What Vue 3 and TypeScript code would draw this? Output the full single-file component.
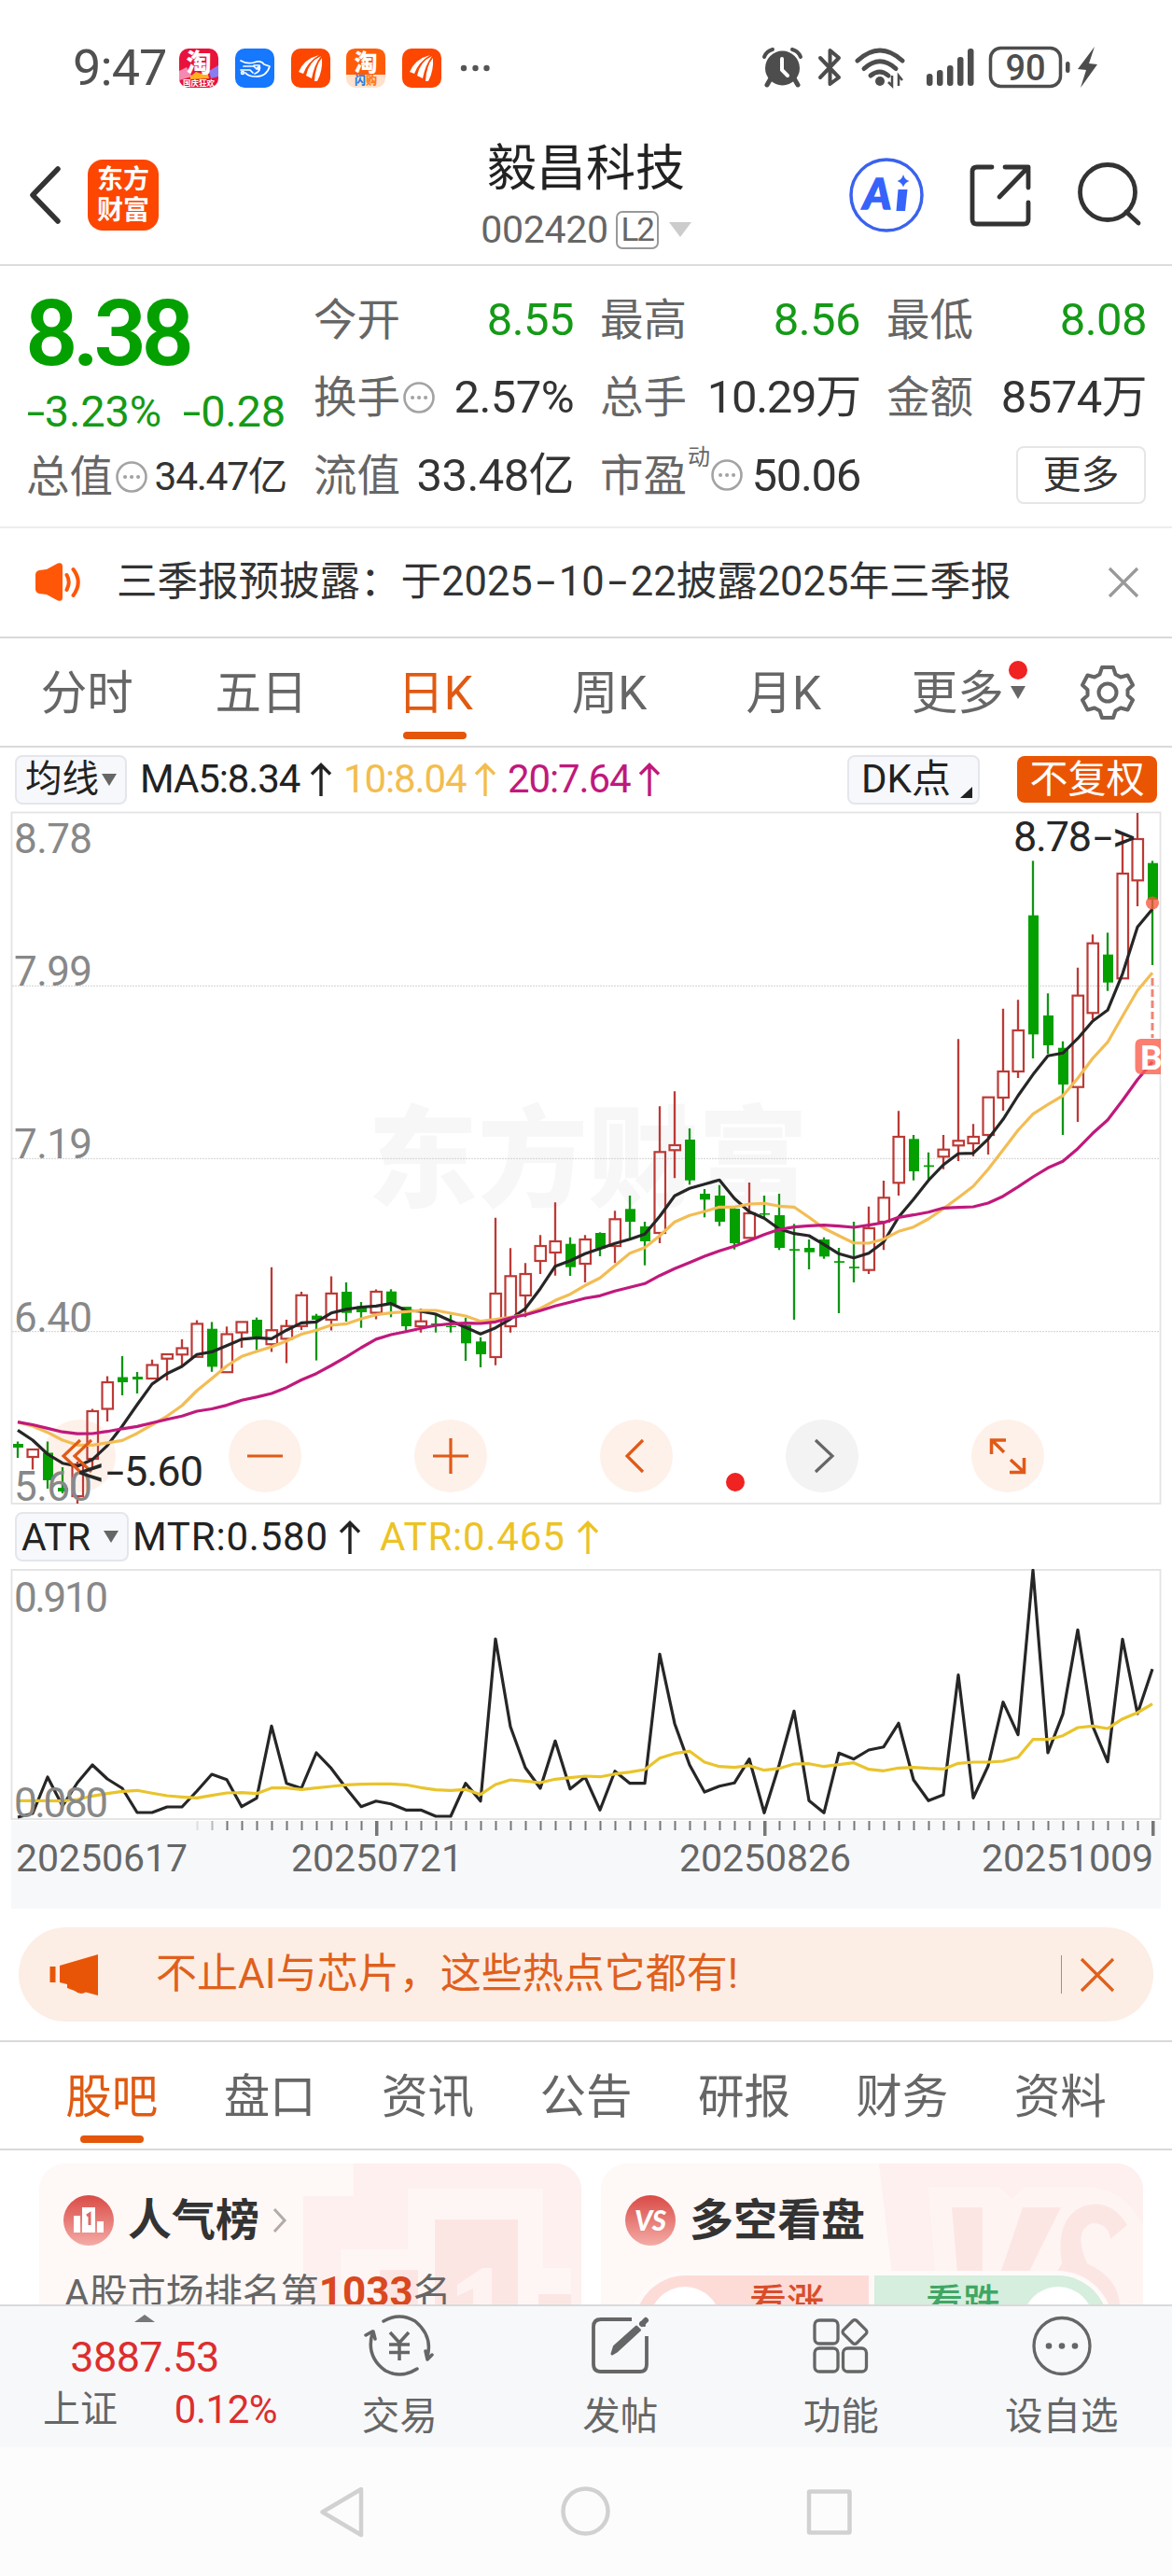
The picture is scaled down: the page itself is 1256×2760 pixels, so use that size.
<script setup lang="ts">
type Candle = [kind: 'u' | 'd', high: number, top: number, bottom: number, low: number]

const STEP = 16
const X0 = 19
const xAt = (i: number): number => X0 + i * STEP

const candles: Candle[] = [
  ['d', 1544.5, 1547, 1551, 1562], ['u', 1553, 1553, 1561, 1574.5], ['d', 1544.5, 1556.5, 1586, 1595],
  ['d', 1572, 1594, 1598, 1600], ['u', 1566, 1569, 1603, 1611], ['u', 1509.5, 1512, 1563, 1575],
  ['u', 1474.6, 1481, 1509.5, 1523], ['d', 1453, 1475.5, 1481, 1495], ['d', 1470, 1475, 1478, 1493],
  ['u', 1456.7, 1462.5, 1477, 1477], ['u', 1451, 1451, 1455.7, 1479], ['u', 1435, 1444.5, 1451.3, 1463],
  ['u', 1414.5, 1418.4, 1453.8, 1453.8], ['d', 1416.4, 1423.7, 1464.4, 1469.8], ['u', 1421.3, 1429.5, 1470.2, 1470.2],
  ['u', 1416.4, 1416.4, 1427.6, 1444], ['d', 1411.6, 1414, 1432, 1446.5], ['u', 1357.8, 1425.2, 1440.2, 1448.4],
  ['u', 1414, 1420.8, 1434.4, 1460.5], ['u', 1384, 1387.8, 1420.8, 1425], ['d', 1407.7, 1409.6, 1414, 1457.6],
  ['u', 1367.5, 1385.9, 1414, 1425.6], ['d', 1374, 1384, 1406.7, 1416], ['d', 1395, 1399.5, 1406, 1422.7],
  ['u', 1381.5, 1384, 1406.5, 1413.6], ['d', 1381.3, 1383.7, 1397.7, 1411.3], ['d', 1400, 1400, 1421, 1425.7],
  ['u', 1402, 1415.7, 1421, 1427.7], ['d', 1409, 1418, 1419.5, 1427.7], ['d', 1408.7, 1420.7, 1422, 1427.7],
  ['d', 1412, 1419.7, 1439.3, 1458], ['d', 1432.7, 1437.3, 1451, 1465], ['u', 1304.7, 1386, 1454, 1462.7],
  ['u', 1337.3, 1367.3, 1421, 1427.7], ['u', 1353.3, 1365, 1388, 1411.3], ['u', 1323.3, 1335, 1351, 1365],
  ['u', 1288.3, 1330, 1342, 1366.7], ['d', 1325.7, 1332.7, 1357.7, 1367], ['u', 1323.3, 1328, 1354, 1374],
  ['d', 1320.3, 1321, 1337.7, 1346], ['u', 1297.3, 1306.3, 1335, 1353.3], ['d', 1281, 1295.3, 1309, 1327.7],
  ['d', 1309, 1314, 1330, 1355.7], ['u', 1185.3, 1234.3, 1321, 1332], ['u', 1169.3, 1227, 1232.3, 1262.3],
  ['d', 1209, 1221, 1264.7, 1269.3], ['d', 1274, 1279, 1285.3, 1304.3], ['d', 1269.7, 1281, 1309, 1313.7],
  ['d', 1293, 1295, 1332, 1338.7], ['u', 1267, 1300, 1326.3, 1326.3], ['d', 1281, 1300, 1301.5, 1306],
  ['d', 1279, 1302, 1337, 1339.3], ['d', 1311.3, 1338.3, 1340, 1414], ['d', 1328, 1337, 1341.7, 1360],
  ['d', 1325.7, 1328, 1346.3, 1348.7], ['d', 1337, 1351.2, 1352.9, 1407], ['d', 1309, 1357.2, 1358.9, 1374],
  ['u', 1292.7, 1316, 1360.7, 1365], ['u', 1265, 1283.3, 1309, 1339.3], ['u', 1190.3, 1218, 1267.3, 1281],
  ['d', 1216, 1220.3, 1255, 1264.7], ['d', 1234.7, 1248.5, 1250.2, 1263], ['u', 1216, 1231.7, 1239.3, 1252.7],
  ['u', 1113.3, 1222.3, 1227.3, 1244], ['u', 1204.3, 1218, 1225, 1239], ['u', 1175.7, 1175.7, 1216, 1237],
  ['u', 1080.7, 1148, 1176, 1190], ['u', 1071.3, 1104, 1148, 1155], ['d', 922.3, 980.7, 1108.3, 1134],
  ['d', 1064.3, 1088, 1120, 1129.3], ['d', 1115.7, 1122.7, 1162, 1216], ['u', 1036.7, 1066.7, 1164.7, 1202],
  ['u', 1001.3, 1010.7, 1085.3, 1092.3], ['d', 999.3, 1022.7, 1052.7, 1061.7], ['u', 894.3, 936, 1048.3, 1048.3],
  ['u', 871, 899, 943.3, 971], ['d', 922.3, 924.7, 964, 1034],
]

const ma5 = [
  1532.3, 1543, 1558, 1567.7, 1571, 1563.8, 1548.8, 1528, 1505, 1482.9, 1471.7, 1464, 1451.3, 1448.4, 1441.7, 1434.9,
  1433.4, 1434.4, 1425.2, 1417.4, 1416.4, 1406.8, 1402.9, 1400.5, 1399.3, 1396.7, 1404, 1405, 1408, 1415.3, 1422.3, 1429.3,
  1422.7, 1413.3, 1402, 1380.7, 1356.7, 1350.7, 1343.3, 1337.7, 1332.3, 1327.7, 1322.3, 1303.3, 1281.3, 1273.3, 1268.7,
  1264.3, 1284, 1298.3, 1305.3, 1316.7, 1321.7, 1324, 1333.3, 1343.3, 1347.7, 1342.7, 1330.7, 1304, 1285, 1264.7, 1248,
  1236, 1235.7, 1220.3, 1199.3, 1174, 1151.3, 1131.3, 1128.3, 1112.7, 1094, 1082.3, 1043.3, 993.3, 974,
]
const ma10 = [
  1523.6, 1528, 1534.7, 1543, 1548.3, 1548.3, 1545.9, 1543.4, 1535.7, 1526.5, 1517.3, 1506, 1490, 1477, 1463.5, 1453.3,
  1448, 1443, 1436.8, 1429.5, 1425.2, 1419.8, 1418.4, 1413, 1408.7, 1406.7, 1405.3, 1404, 1404, 1407, 1410, 1415.7, 1413.7,
  1411.3, 1408.3, 1402, 1393.3, 1386.7, 1377.3, 1369.3, 1356, 1342.7, 1336.7, 1324, 1309.3, 1302.3, 1298, 1293.3, 1293.3,
  1290, 1289.3, 1292.3, 1293.3, 1304.3, 1316, 1324, 1331.7, 1332, 1327.7, 1319.3, 1314.7, 1306, 1295, 1283.3, 1271, 1252.7,
  1232, 1211, 1193.7, 1183.3, 1174, 1155.3, 1134, 1116.7, 1088.7, 1061.3, 1042.3,
]
const ma20 = [
  1523.6, 1526.5, 1530.4, 1534.2, 1536.2, 1536, 1533.7, 1530.8, 1528.4, 1524.5, 1520.7, 1517.3, 1512, 1509.5, 1505.6,
  1500.3, 1496.9, 1493, 1486.7, 1478.5, 1471.7, 1463, 1453.8, 1444, 1434.9, 1430, 1426.7, 1423.3, 1420, 1418.3, 1417.7, 1418,
  1416.3, 1412, 1408.7, 1404.3, 1399.3, 1395.3, 1391, 1388.3, 1383.3, 1379.3, 1375.3, 1366.7, 1359.3, 1352.7, 1346, 1340.3,
  1335.3, 1329.3, 1322.7, 1317.3, 1314.7, 1313.3, 1312.7, 1313.7, 1315, 1312.7, 1310, 1304.3, 1301.7, 1298.7, 1294.3,
  1293.7, 1293, 1289, 1281.7, 1271.7, 1261, 1251.3, 1244.3, 1230.7, 1214.3, 1200, 1179, 1156.7, 1137.7,
]
const mtr = [
  1947, 1943, 1904, 1935, 1910, 1891, 1906, 1916, 1942, 1942, 1936, 1936, 1919, 1901, 1906.7, 1935.7, 1926.7, 1849.3,
  1910.7, 1916, 1878, 1894.7, 1916, 1935.7, 1929.7, 1932.7, 1939.3, 1939.3, 1946, 1946, 1910.7, 1929.7, 1756, 1850, 1894,
  1916, 1865.3, 1916.7, 1904, 1939.3, 1897.7, 1910.7, 1910.7, 1772.3, 1846.7, 1891, 1920, 1913.7, 1910.3, 1884.7, 1942.3,
  1891, 1833.3, 1929.3, 1942.3, 1878.3, 1884.7, 1875, 1871.7, 1846.3, 1907, 1929.3, 1923, 1794.7, 1926.3, 1892, 1823.7,
  1858.7, 1682.3, 1878, 1836.7, 1746.3, 1849.3, 1887.7, 1756.3, 1836, 1788.3,
]
const atr = [
  1929.3, 1929.3, 1929.3, 1929.7, 1928, 1924.3, 1921.7, 1919.3, 1918.3, 1921.3, 1924, 1925.3, 1926.3, 1923.7, 1921,
  1920.7, 1921.7, 1915.7, 1915.7, 1917.3, 1915.7, 1914, 1912.3, 1911.7, 1911.3, 1911.3, 1912.3, 1915.3, 1917.7, 1918.3,
  1917.3, 1922.7, 1912, 1907, 1908.3, 1910, 1906.3, 1904.7, 1903, 1903.7, 1900.7, 1898.7, 1896, 1883.7, 1878.7, 1876.3,
  1888, 1892.7, 1893.7, 1891.7, 1896.7, 1894.7, 1890, 1889.7, 1892.7, 1890.7, 1888.7, 1895.7, 1897.3, 1894.3, 1893.7,
  1894.7, 1895.3, 1889.3, 1888, 1888, 1887, 1882.7, 1863.7, 1863.7, 1859.7, 1851, 1849.3, 1852, 1841.7, 1835, 1825.7,
]

const points = (values: number[]): string => values.map((y, i) => `${xAt(i)},${y}`).join(' ')

const priceLabels = [
  { text: '8.78', y: 914 },
  { text: '7.99', y: 1056 },
  { text: '7.19', y: 1241 },
  { text: '6.40', y: 1427 },
  { text: '5.60', y: 1608 },
]
const ticks = Array.from({ length: 65 }, (_, k) => k + 12)
const isMajor = (i: number): boolean => i === 24 || i === 50 || i === 76
const dates = [
  { text: '20250617', x: 17 },
  { text: '20250721', x: 312 },
  { text: '20250826', x: 728 },
  { text: '20251009', x: 1052 },
]
const tools = [85, 284, 483, 682, 881, 1080]
const periods = ['分时', '五日', '日K', '周K', '月K']
const sections = ['股吧', '盘口', '资讯', '公告', '研报', '财务', '资料']
</script>

<template>
  <div class="screen">
    <header class="status">
      <span class="clock">9:47</span>
      <div class="apps">
        <svg width="42" height="42" viewBox="0 0 42 42">
          <rect width="42" height="42" rx="10" fill="#e8123c" />
          <path d="M0 24 L8 20 L14 30 L0 34Z" fill="#f58ab0" />
          <path d="M42 18 L32 24 L34 32 L42 30Z" fill="#8a7cf0" />
          <path d="M12 30 L18 25 L24 27 L30 24 L32 32 L12 33Z" fill="#ffb21e" />
          <text x="21" y="25" font-size="27" font-weight="900" text-anchor="middle" fill="#fff">淘</text>
          <text x="21" y="39.5" font-size="8.5" font-weight="700" text-anchor="middle" fill="#fff">国庆狂欢</text>
        </svg>
        <svg width="42" height="42" viewBox="0 0 42 42">
          <rect width="42" height="42" rx="10" fill="#1677ff" />
          <g fill="none" stroke="#fff" stroke-width="1.7" stroke-linecap="round" stroke-linejoin="round">
            <path d="M6 13 Q13 17 20 15 Q28 12 31 17 L37 19 Q34 30 22 30 Q14 30 11 26" />
            <path d="M9 19 H20 L23 22 M6 23 H16 L19 26 M20 18 H26 Q28 24 21 27" />
            <circle cx="8" cy="26" r="1.4" /><circle cx="25" cy="21" r="1.2" />
          </g>
        </svg>
        <svg width="42" height="42" viewBox="0 0 42 42"><rect width="42" height="42" rx="10" fill="#fd4600" /><path d="M8 25 Q14 11 30 7 Q18 14 13 27Z M16 29 Q19 14 32 8 Q25 17 22 32Z M25 35 Q26 18 33 10 Q34 24 28 35Z" fill="#fff" /></svg>
        <svg width="42" height="42" viewBox="0 0 42 42">
          <rect width="42" height="42" rx="10" fill="#ffe2cb" />
          <path d="M0 28 V10 Q0 0 10 0 H32 Q42 0 42 10 V28Z" fill="#ff5c0a" />
          <text x="21" y="24" font-size="25" font-weight="900" text-anchor="middle" fill="#fff">淘</text>
          <text x="21" y="39" font-size="12" font-weight="900" text-anchor="middle" fill="#ff7a1a"><tspan fill="#2c7be0">闪</tspan>购</text>
        </svg>
        <svg width="42" height="42" viewBox="0 0 42 42"><rect width="42" height="42" rx="10" fill="#fd4600" /><path d="M8 25 Q14 11 30 7 Q18 14 13 27Z M16 29 Q19 14 32 8 Q25 17 22 32Z M25 35 Q26 18 33 10 Q34 24 28 35Z" fill="#fff" /></svg>
      </div>
      <svg class="dots" width="32" height="8" viewBox="0 0 32 8" fill="#555"><circle cx="4" cy="4" r="3.2" /><circle cx="16.5" cy="4" r="3.2" /><circle cx="28.5" cy="4" r="3.2" /></svg>
      <svg class="sys" width="364" height="50" viewBox="816 47 364 50">
        <g fill="#4d4d4d">
          <circle cx="838.5" cy="73" r="18.5" />
          <path d="M826 84 L822 91 M851 84 L855 91" stroke="#4d4d4d" stroke-width="5" stroke-linecap="round" />
          <path d="M819 61 Q821 55 828 53 M858 61 Q856 55 849 53" fill="none" stroke="#4d4d4d" stroke-width="4" stroke-linecap="round" />
          <path d="M838 63 V75 L844 81" fill="none" stroke="#fff" stroke-width="4" stroke-linecap="round" />
          <path d="M879 62 L899 83 L889.500 90 V54 L899 62 L879 83" fill="none" stroke="#4d4d4d" stroke-width="4" stroke-linejoin="round" stroke-linecap="round" />
          <g fill="none" stroke="#4d4d4d" stroke-width="5" stroke-linecap="round">
            <path d="M919 65 Q943 43 967 65" /><path d="M926 73.500 Q943 58 960 73.500" /><path d="M933 81 Q943 73 952 81" />
          </g>
          <circle cx="943" cy="87" r="5" />
          <path d="M956 81 V92 L952 88 M963 92 V81 L967 86" fill="none" stroke="#4d4d4d" stroke-width="2.500" />
          <rect x="993" y="79" width="6.500" height="13" rx="3" /><rect x="1004" y="75" width="6.500" height="17" rx="3" />
          <rect x="1015" y="70" width="6.500" height="22" rx="3" /><rect x="1026" y="61" width="6.500" height="31" rx="3" />
          <rect x="1037" y="52" width="6.500" height="40" rx="3" />
          <rect x="1061.500" y="51.500" width="75" height="41" rx="11" fill="none" stroke="#4d4d4d" stroke-width="3.500" />
          <rect x="1142" y="66" width="4.500" height="12" rx="2.200" />
          <path d="M1173 50 L1155 74 L1164 75 L1158 94 L1176 69 L1167 68Z" />
          <text x="1099" y="86" font-size="38" font-weight="500" text-anchor="middle">90</text>
        </g>
      </svg>
    </header>

    <div class="titlebar">
      <svg class="back" width="36" height="62" viewBox="0 0 36 62"><path d="M32 3 L5 31 L32 59" fill="none" stroke="#333" stroke-width="5.500" stroke-linecap="round" stroke-linejoin="round" /></svg>
      <div class="logo"><span>东方</span><span>财富</span></div>
      <div class="name">
        <h1>毅昌科技</h1>
        <div class="code"><span>002420</span><b>L2</b><i></i></div>
      </div>
      <div class="actions">
        <svg width="84" height="84" viewBox="908 167 84 84">
          <circle cx="950" cy="209" r="38" fill="none" stroke="#3a62ee" stroke-width="3.500" />
          <text x="925" y="224" font-size="46" font-weight="900" fill="#3663fa" stroke="#3663fa" stroke-width="1.500" class="lato" font-style="italic">A</text>
          <path d="M962.500 203 H972.500 L970 226 H960.500Z M968 187 Q969.500 192.500 974.500 194 Q969.500 195.500 968 200.500 Q966.500 195.500 961.500 194 Q966.500 192.500 968 187Z" fill="#3663fa" />
        </svg>
        <svg width="74" height="74" viewBox="1035 172 74 74"><path d="M1063 179 H1047 Q1042 179 1042 184 V235 Q1042 240 1047 240 H1097 Q1102 240 1102 235 V217 M1077 179 H1102 V201 M1102 179 L1071 211" fill="none" stroke="#333" stroke-width="4.800" stroke-linecap="round" stroke-linejoin="round" /></svg>
        <svg width="74" height="74" viewBox="1152 172 74 74"><g fill="none" stroke="#333" stroke-width="4.800" stroke-linecap="round"><circle cx="1187" cy="206" r="29.500" /><path d="M1207 227 L1220 239" /></g></svg>
      </div>
    </div>

    <section class="quote">
      <div class="lead">
        <div class="price">8.38</div>
        <div class="change"><span><i class="dash">-</i>3.23%</span><span><i class="dash">-</i>0.28</span></div>
        <div class="cell small"><label>总值</label><svg class="tip" viewBox="0 0 34 34"><circle cx="17" cy="17" r="15.500" /><path d="M10 17h.1M17 17h.1M24 17h.1" /></svg><em>34.47亿</em></div>
      </div>
      <div class="stats">
        <div class="cell"><label>今开</label><em class="down">8.55</em></div>
        <div class="cell"><label>最高</label><em class="down">8.56</em></div>
        <div class="cell"><label>最低</label><em class="down">8.08</em></div>
        <div class="cell"><label>换手</label><svg class="tip" viewBox="0 0 34 34"><circle cx="17" cy="17" r="15.500" /><path d="M10 17h.1M17 17h.1M24 17h.1" /></svg><em>2.57%</em></div>
        <div class="cell"><label>总手</label><em class="tight">10.29万</em></div>
        <div class="cell"><label>金额</label><em>8574万</em></div>
        <div class="cell"><label>流值</label><em>33.48亿</em></div>
        <div class="cell"><label>市盈</label><sup>动</sup><svg class="tip" viewBox="0 0 34 34"><circle cx="17" cy="17" r="15.500" /><path d="M10 17h.1M17 17h.1M24 17h.1" /></svg><em class="tight">50.06</em></div>
        <div class="cell"><button class="more">更多</button></div>
      </div>
    </section>

    <section class="notice">
      <svg width="52" height="42" viewBox="36 603 52 42"><path d="M38 616 Q38 612 42 611 L50 610 L62 603.500 Q67 602 67 607 V640 Q67 645 62 643.500 L50 637 L42 636 Q38 635 38 631Z" fill="#ff5608" /><path d="M71.500 616 Q76 623.500 71.500 632 M78.500 610 Q89 623.500 78.500 638" fill="none" stroke="#ff5608" stroke-width="4" stroke-linecap="round" /></svg>
      <p>三季报预披露：于2025<i class="dash">-</i>10<i class="dash">-</i>22披露2025年三季报</p>
      <svg width="36" height="36" viewBox="0 0 36 36"><path d="M3 3 L33 33 M33 3 L3 33" stroke="#999" stroke-width="3.200" /></svg>
    </section>

    <nav class="periods">
      <div v-for="p in periods" :key="p" class="tab" :class="{ on: p === '日K' }">{{ p }}</div>
      <div class="tab extra">更多<span class="caret"></span><span class="badge"></span></div>
      <svg class="gear" width="62" height="62" viewBox="-31 -31 62 62" fill="none" stroke="#666" stroke-width="4" stroke-linejoin="round">
        <path d="M-6 -27 H6 L8.500 -19.500 L14 -16.500 L21.500 -18.500 L27 -8 L21.500 -3 V3 L27 8 L21.500 18.500 L14 16.500 L8.500 19.500 L6 27 H-6 L-8.500 19.500 L-14 16.500 L-21.500 18.500 L-27 8 L-21.500 3 V-3 L-27 -8 L-21.500 -18.500 L-14 -16.500 L-8.500 -19.500Z" />
        <circle r="9.500" />
      </svg>
    </nav>

    <div class="legend main">
      <span class="chip avg">均线<i class="tri"></i></span>
      <span class="ind dark">MA5:8.34<svg class="up" viewBox="0 0 24 36"><path d="M12 36 V2 M2 12.500 L12 2.500 L22 12.500" /></svg></span>
      <span class="ind amber">10:8.04<svg class="up" viewBox="0 0 24 36"><path d="M12 36 V2 M2 12.500 L12 2.500 L22 12.500" /></svg></span>
      <span class="ind pink">20:7.64<svg class="up" viewBox="0 0 24 36"><path d="M12 36 V2 M2 12.500 L12 2.500 L22 12.500" /></svg></span>
      <span class="chip dk">DK点<i class="corner"></i></span>
      <span class="chip solid">不复权</span>
    </div>

    <svg class="chart" width="1256" height="743" viewBox="0 869 1256 743">
      <text x="630" y="1284" class="mark" font-size="118" font-weight="900" text-anchor="middle" fill="#f7f7f7">东方财富</text>
      <rect x="12.500" y="870.500" width="1231" height="740.500" fill="none" stroke="#e3e3e3" stroke-width="1.800" />
      <line v-for="y in [1056.300, 1241.300, 1426.600]" :key="y" x1="13" :y1="y" x2="1243" :y2="y" stroke="#d9d9d9" stroke-width="1.200" stroke-dasharray="2 1" />
      <circle v-for="x in tools" :key="x" :cx="x" cy="1560" r="39" :fill="x === 881 ? '#f3f3f3' : '#fef1ea'" />
      <g v-for="(c, i) in candles" :key="i">
        <template v-if="c[0] === 'u'">
          <path :d="`M${xAt(i)} ${c[1]}V${c[2]}M${xAt(i)} ${c[3]}V${c[4]}`" stroke="#bc3a36" stroke-width="2.300" />
          <rect :x="xAt(i) - 5.500" :y="c[2]" width="11.500" :height="c[3] - c[2]" fill="none" stroke="#bc3a36" stroke-width="2.200" />
        </template>
        <template v-else>
          <path :d="`M${xAt(i)} ${c[1]}V${c[4]}`" stroke="#109516" stroke-width="2.300" />
          <rect :x="xAt(i) - 5" :y="c[2]" width="11" :height="c[3] - c[2]" fill="#04a000" />
        </template>
      </g>
      <g fill="none" stroke-width="3.200" stroke-linejoin="round">
        <polyline :points="points(ma5)" stroke="#262626" />
        <polyline :points="points(ma10)" stroke="#f2bd55" />
        <polyline :points="points(ma20)" stroke="#c0197c" />
      </g>
      <g class="axis">
        <text v-for="l in priceLabels" :key="l.text" x="15" :y="l.y" textLength="84">{{ l.text }}</text>
      </g>
      <g fill="none" stroke="#e05a17" stroke-width="3.200">
        <path d="M86 1543 L68 1560 L86 1577 M98 1543 L80 1560 L98 1577" />
        <path d="M265 1560 H303" /><path d="M464 1560 H502 M483 1541 V1579" />
        <path d="M689 1543 L672 1560 L689 1577" />
        <path d="M874 1543 L892 1560 L874 1577" stroke="#666" />
        <path d="M1062.500 1558 V1543 H1078 M1063 1543 L1076 1556 M1083 1564 L1097 1577 M1097.500 1562 V1577.500 H1082" stroke-width="3.500" />
      </g>
      <circle cx="788" cy="1588" r="10" fill="#f02222" />
      <g class="flag">
        <text x="83" y="1592" textLength="30" lengthAdjust="spacingAndGlyphs">&lt;</text>
        <text x="114" y="1592" textLength="19" lengthAdjust="spacingAndGlyphs">-</text>
        <text x="133" y="1592" textLength="85">5.60</text>
        <text x="1086" y="912" textLength="84">8.78</text>
        <text x="1172" y="912" textLength="20" lengthAdjust="spacingAndGlyphs">-</text>
        <text x="1192" y="912" textLength="25" lengthAdjust="spacingAndGlyphs">&gt;</text>
      </g>
      <path d="M1235 1048 V1112" stroke="#ee8674" stroke-width="3" stroke-dasharray="8 4" />
      <circle cx="1235" cy="967.500" r="7" fill="#f8563c" fill-opacity=".78" />
      <path d="M1244 1113 H1223 Q1216.500 1113 1216.500 1120 V1144 Q1216.500 1151 1223 1151 H1244Z" fill="#f95f4c" fill-opacity=".8" />
      <text x="1222" y="1145.500" font-size="37" font-weight="700" fill="#fff">B</text>
      <rect x="1244.500" y="1100" width="12" height="60" fill="#fff" />
    </svg>

    <div class="legend sub">
      <span class="chip atr">ATR<i class="tri"></i></span>
      <span class="ind dark">MTR:0.580<svg class="up" viewBox="0 0 24 36"><path d="M12 36 V2 M2 12.500 L12 2.500 L22 12.500" /></svg></span>
      <span class="ind gold">ATR:0.465<svg class="up" viewBox="0 0 24 36"><path d="M12 36 V2 M2 12.500 L12 2.500 L22 12.500" /></svg></span>
    </div>

    <svg class="chart" width="1256" height="364" viewBox="0 1681 1256 364">
      <rect x="12" y="1951" width="1232" height="94" fill="#f7f8fa" />
      <rect x="12.500" y="1682" width="1231" height="267" fill="none" stroke="#e3e3e3" stroke-width="1.800" />
      <g fill="none" stroke-width="3.200" stroke-linejoin="round">
        <polyline :points="points(mtr)" stroke="#262626" />
        <polyline :points="points(atr)" stroke="#e9c42c" />
      </g>
      <g class="axis"><text x="15" y="1727" textLength="101">0.910</text><text x="15" y="1947" textLength="101">0.080</text></g>
      <rect v-for="i in ticks" :key="i" :x="xAt(i) - (isMajor(i) ? 1 : 0.500)" y="1951" :width="isMajor(i) ? 3.500 : 2" :height="isMajor(i) ? 16 : 10" fill="#777" :opacity="i === 12 ? 0.2 : i === 13 ? 0.5 : 1" />
      <g class="dates"><text v-for="d in dates" :key="d.text" :x="d.x" y="2005" textLength="184">{{ d.text }}</text></g>
    </svg>

    <div class="banner">
      <svg width="54" height="46" viewBox="52 2093 54 46" fill="#e95506"><rect x="53.500" y="2107" width="6" height="17" /><path d="M64 2106 L105 2094 V2138 L92 2134.500 Q86 2138 80 2133 L72 2130 V2126 L64 2124Z" /></svg>
      <p>不止AI与芯片，这些热点它都有!</p>
      <span class="sep"></span>
      <svg width="40" height="38" viewBox="0 0 40 38"><path d="M3 2 L37 36 M37 2 L3 36" stroke="#e0601c" stroke-width="3.200" /></svg>
    </div>

    <nav class="sections">
      <div v-for="s in sections" :key="s" class="tab" :class="{ on: s === '股吧' }">{{ s }}</div>
    </nav>

    <main class="cards">
      <article>
        <svg class="art" width="581" height="151" viewBox="42 2318 581 151">
          <path d="M379 2318 H623 V2469 H325 V2353 H379Z" fill="#fdf0ee" />
          <path d="M365 2410 H437 V2345 H582 V2430 H612 V2469 H365Z" fill="#fef6f4" />
          <path d="M466 2378 H555 V2469 H466Z M407 2432 H448 V2469 H407Z M577 2458 H612 V2469 H577Z" fill="#fce6e4" />
          <path d="M490 2448 L517 2430 H527 V2469 H507 V2452 L490 2460Z" fill="#fef3f1" />
        </svg>
        <h2>
          <svg width="56" height="56" viewBox="-28 -28 56 56">
            <defs><linearGradient id="rose" x1="0" y1="0" x2="0" y2="1"><stop offset="0" stop-color="#d94b46" /><stop offset="1" stop-color="#f4aba6" /></linearGradient></defs>
            <circle r="27" fill="url(#rose)" /><path d="M-16 -5 H-9 V13 H-16Z M-7 -14 H7 V13 H-7Z M9 1 H16 V13 H9Z" fill="#fff" /><path d="M-2 -5 L1 -7 V5" fill="none" stroke="#dc6a66" stroke-width="3" />
          </svg>
          人气榜
          <svg width="16" height="28" viewBox="0 0 16 28"><path d="M2 2 L13 14 L2 26" fill="none" stroke="#b3aaa9" stroke-width="3" /></svg>
        </h2>
        <p class="rank">A股市场排名第<b>1033</b>名</p>
      </article>
      <article>
        <svg class="art" width="581" height="151" viewBox="644 2318 581 151">
          <path d="M942 2318 H1225 V2469 H960Z" fill="#fdf0ee" />
          <path d="M995 2343 H1070 L1085 2356 L1098 2343 H1160 Q1205 2343 1225 2385 V2469 H1005Z" fill="#fef5f3" />
          <path d="M1020 2365 H1053 V2450 H1027Z M1096 2365 H1137 L1095 2450 L1065 2456Z M1208 2384 Q1190 2354 1160 2364 Q1130 2378 1138 2425 L1112 2469 H1200 Q1198 2440 1165 2425 Q1150 2390 1170 2382 Q1188 2382 1190 2399Z" fill="#fce6e4" />
        </svg>
        <h2>
          <svg width="56" height="56" viewBox="-28 -28 56 56"><circle r="27" fill="url(#rose)" /><text x="0" y="11" font-size="30" font-weight="900" font-style="italic" text-anchor="middle" class="lato" fill="#fff" textLength="34" lengthAdjust="spacingAndGlyphs">VS</text></svg>
          多空看盘
        </h2>
        <div class="vote"><span class="rise"><i></i>看涨</span><span class="fall">看跌<i></i></span></div>
      </article>
    </main>

    <footer class="bar">
      <div class="index">
        <i class="peak"></i>
        <strong>3887.53</strong>
        <div><span>上证</span><b>0.12%</b></div>
      </div>
      <div class="item">
        <svg width="80" height="72" viewBox="388 2477 80 72" fill="none" stroke="#666" stroke-width="3.500" stroke-linecap="round" stroke-linejoin="round"><path d="M411 2487 Q428 2477 445 2487 Q464 2503 458 2525 M458 2528 L463 2523 M458 2528 L456 2519 M447 2538 Q430 2549 413 2540 Q392 2525 399 2500 M399 2498 L392 2502 M400 2498 L402 2506" /><path d="M418 2499 L428 2510 L438 2499 M428 2510 V2529 M417 2512 H439 M417 2520.500 H439" stroke-linecap="butt" /></svg>
        <span>交易</span>
      </div>
      <div class="item">
        <svg width="80" height="72" viewBox="625 2477 80 72" fill="none" stroke="#666" stroke-width="3.800" stroke-linecap="round" stroke-linejoin="round"><path d="M677 2485 H644 Q636 2485 636 2493 V2533 Q636 2541 644 2541 H686 Q693 2541 693 2533 V2503" stroke-linecap="butt" /><path d="M656 2522 L658.500 2514 L682 2493 L685.500 2496.500 L661 2519Z M687 2488.500 L690.500 2491.500" fill="#666" stroke-width="3" /><path d="M688 2490 L692 2486" stroke-width="6" /></svg>
        <span>发帖</span>
      </div>
      <div class="item">
        <svg width="80" height="72" viewBox="861 2477 80 72" fill="none" stroke="#666" stroke-width="3.300" stroke-linejoin="round"><rect x="873" y="2486" width="25" height="25" rx="5" /><rect x="873" y="2516" width="25" height="25" rx="5" /><rect x="903.500" y="2516" width="25" height="25" rx="5" /><rect x="906" y="2488.500" width="20" height="20" rx="3" transform="rotate(45 916 2498.500)" /></svg>
        <span>功能</span>
      </div>
      <div class="item">
        <svg width="80" height="72" viewBox="1098 2477 80 72"><circle cx="1138" cy="2513.500" r="30" fill="none" stroke="#666" stroke-width="3.300" /><g fill="#666"><circle cx="1124" cy="2513.500" r="3.300" /><circle cx="1138" cy="2513.500" r="3.300" /><circle cx="1152" cy="2513.500" r="3.300" /></g></svg>
        <span>设自选</span>
      </div>
    </footer>

    <div class="sysnav">
      <svg width="600" height="64" viewBox="328 2659 600 64" fill="none" stroke="#d1d1d1" stroke-width="4.500" stroke-linejoin="round"><path d="M387 2667 L345.500 2691.500 L387 2716Z" /><circle cx="627.500" cy="2690.500" r="24" /><rect x="867" y="2669.500" width="43.500" height="44" rx="1" /></svg>
    </div>
  </div>
</template>

<style>
body { margin: 0; background: #fff; }
</style>

<style scoped>
.screen { width: 1256px; height: 2760px; overflow: hidden; display: flex; flex-direction: column; background: #fff; color: #333; font-family: Roboto, "Noto Sans CJK SC", sans-serif; }
.screen > * { flex: none; box-sizing: border-box; }
h1, h2, p { margin: 0; font-weight: 400; }
i, em { font-style: normal; }
svg { display: block; flex: none; }
.lato { font-family: Lato, sans-serif; }
.dash { display: inline-block; transform: scaleX(1.5); }

.status { height: 142px; padding-left: 78px; display: flex; align-items: center; position: relative; }
.clock { width: 114px; font-size: 54px; line-height: 60px; letter-spacing: -.9px; color: #505050; white-space: nowrap; padding-top: 3px; box-sizing: border-box; }
.apps { display: flex; gap: 17.8px; padding-top: 3px; }
.dots { margin: 3px 0 0 20px; }
.sys { margin-left: auto; margin-right: 76px; padding-top: 2px; }

.titlebar { height: 143px; padding: 0 30px; display: flex; align-items: center; border-bottom: 2px solid #dcdcdc; position: relative; }
.back { margin-top: -8px; }
.logo { width: 76px; height: 76px; margin: -8px 0 0 28px; border-radius: 16px; background: #fd4600; color: #fff; font-size: 28px; line-height: 33px; font-weight: 700; display: flex; flex-direction: column; align-items: center; justify-content: center; }
.name { flex: 1; display: flex; flex-direction: column; align-items: center; padding-left: 178px; }
h1 { font-size: 53px; line-height: 70px; color: #222; margin: -10px 0 8px; }
.code { display: flex; align-items: center; font-size: 41px; line-height: 46px; color: #666; letter-spacing: -.3px; margin-top: -1px; }
.code b { width: 42px; height: 37px; margin-left: 8px; border: 2px solid #999; border-radius: 7px; font-weight: 400; font-size: 35px; line-height: 37px; text-align: center; letter-spacing: -2px; }
.code i { margin-left: 11px; border: 12px solid transparent; border-top: 16px solid #ccc; border-bottom: 0; }
.actions { display: flex; align-items: center; justify-content: space-between; width: 318px; margin: -8px 0 0 0; }

.quote { height: 281px; padding-left: 30px; display: flex; border-bottom: 2px solid #ededed; }
.lead { width: 276px; margin-right: 30px; }
.price { height: 116px; line-height: 116px; margin-top: 14px; font-size: 99px; font-weight: 600; letter-spacing: -5.6px; color: #04a000; margin-left: -3px; }
.change { height: 52px; line-height: 52px; display: flex; justify-content: space-between; font-size: 47px; letter-spacing: -.2px; color: #159a17; }
.change .dash { margin: 0 3px 0 2px; }
.stats { display: grid; grid-template-columns: repeat(3, 276px); column-gap: 31px; grid-auto-rows: 83.300px; margin-top: 16px; }
.cell { display: flex; align-items: center; height: 83px; line-height: 83px; white-space: nowrap; }
.cell label { font-size: 46.500px; color: #666; position: relative; top: 1px; }
.cell em { margin-left: auto; margin-right: -3px; font-size: 49px; letter-spacing: -.6px; }
.cell em.tight { letter-spacing: -1.300px; }
.cell em.down { color: #159a17; }
.lead .cell { margin: 2px -1px 0 -2px; }
.lead .cell em { font-size: 42.500px; letter-spacing: -1.300px; margin-right: 0; }
.tip { width: 34px; height: 34px; margin-left: 3px; fill: none; stroke: #a3a3a3; stroke-width: 2.600; stroke-linecap: round; }
.tip path { stroke-width: 4; }
sup { font-size: 24px; line-height: 24px; color: #666; align-self: flex-start; margin: 10px 0 0 1px; }
.cell sup + .tip { margin-left: 1px; }
.more { margin-left: auto; margin-right: -2px; width: 139px; height: 62px; border: 2px solid #e6e6e6; border-radius: 8px; background: #fff; color: #333; font: 41px/54px Roboto, "Noto Sans CJK SC", sans-serif; padding: 0; }

.notice { height: 118px; border-bottom: 2px solid #d9d9d9; display: flex; align-items: center; padding: 0 34px 0 36px; }
.notice p { flex: 1; margin-left: 37px; font-size: 43.500px; line-height: 60px; color: #333; white-space: nowrap; }
.notice .dash { margin: 0 8px; transform: scaleX(1.700); }

.periods { height: 117px; border-bottom: 2px solid #dadada; display: flex; align-items: center; }
.tab { position: relative; box-sizing: border-box; height: 115px; padding-top: 3px; line-height: 112px; text-align: center; font-size: 49.500px; color: #666; }
.periods .tab { width: 186.600px; }
.tab.on { color: #e05a12; }
.tab.on::after { content: ""; position: absolute; left: 50%; bottom: 7px; width: 68px; height: 8px; margin-left: -34px; border-radius: 4px; background: #e4560a; }
.extra .caret { position: absolute; left: 150px; top: 51px; border: 8px solid transparent; border-top: 14px solid #666; border-bottom: 0; }
.extra .badge { position: absolute; left: 148px; top: 24px; width: 20px; height: 20px; border-radius: 50%; background: #f02222; }
.gear { margin-left: 36px; }

.legend { display: flex; align-items: center; font-size: 42px; line-height: 50px; white-space: nowrap; }
.legend.main { height: 68px; padding: 0 16px; }
.legend.sub { height: 69px; padding: 0 16px; }
.chip { box-sizing: border-box; height: 53px; border: 2px solid #e4e6ec; border-radius: 8px; background: #f7f8fb; color: #222; line-height: 48px; font-size: 39.500px; display: flex; align-items: center; }
.avg { width: 120px; padding-left: 9px; }
.tri { border: 8.500px solid transparent; border-top: 13px solid #666; border-bottom: 0; margin-left: 3px; }
.dk { width: 142px; margin-left: auto; padding-left: 13px; position: relative; font-size: 42px; }
.corner { position: absolute; right: 6px; bottom: 5px; border-left: 13px solid transparent; border-bottom: 12px solid #222; }
.solid { width: 150px; margin-left: 40px; border: 0; height: 50px; background: #ea5504; color: #fff; font-size: 41px; justify-content: center; }
.ind { display: flex; align-items: center; justify-content: space-between; }
.main .ind { letter-spacing: -1.100px; margin-left: 12px; width: 164px; }
.main .dark { width: 206px; margin-left: 14px; }
.up { width: 24px; height: 36px; fill: none; stroke: currentColor; stroke-width: 3.400; }
.dark { color: #222; }
.amber { color: #f2bd50; }
.pink { color: #c0197c; }
.gold { color: #ecc325; }
.atr { width: 122px; padding-left: 5px; font-size: 41px; }
.atr .tri { margin-left: 14px; }
.sub .ind { letter-spacing: .8px; }
.sub .dark { width: 245px; margin-left: 4px; }
.sub .gold { width: 235px; margin-left: 20px; }
.chart { font-family: Roboto, "Noto Sans CJK SC", sans-serif; }
.mark { font-family: "Noto Sans CJK SC", sans-serif; }
.axis { font-size: 44px; fill: #888; }
.flag { font-size: 45px; fill: #262626; }
.dates { font-size: 41px; fill: #666; }

.banner { margin: 20px 20px 20px; height: 101px; border-radius: 51px; background: #fceee5; display: flex; align-items: center; padding: 0 40px 0 32px; color: #e0601c; }
.banner p { flex: 1; margin-left: 61px; font-size: 44px; line-height: 60px; margin-top: -2px; white-space: nowrap; }
.sep { width: 1.500px; height: 41px; background: #dc7a44; margin-right: 18px; }

.sections { height: 118px; border-top: 2px solid #d9d9d9; border-bottom: 2px solid #d9d9d9; display: flex; padding: 0 35px; }
.sections .tab { flex: 1; color: #666; }
.sections .tab.on { color: #e05a12; }

.cards { height: 165px; padding: 14px 31px 0 42px; display: flex; gap: 21px; overflow: hidden; }
.cards article { position: relative; width: 581px; height: 200px; border-radius: 28px 28px 0 0; background: #fef8f6; overflow: hidden; }
.art { position: absolute; left: 0; top: 0; }
h2 { position: relative; display: flex; align-items: center; gap: 14px; height: 56px; margin: 33px 0 0 25px; font-size: 47px; line-height: 56px; font-weight: 700; color: #333; }
.rank { position: relative; margin: 22px 0 0 27px; font-size: 41px; line-height: 54px; color: #666; white-space: nowrap; }
.rank b { color: #d9481e; font-size: 44px; }
.vote { position: relative; margin: 26px 0 0 31px; width: 518px; height: 90px; box-sizing: border-box; border: 5px solid #fffafa; border-bottom: 0; border-radius: 60px 60px 0 0; display: flex; gap: 6px; overflow: hidden; font-size: 40px; line-height: 60px; font-weight: 500; }
.vote span { flex: 1; display: flex; }
.vote i { width: 76px; height: 76px; border-radius: 50%; background: #fff; margin-top: 12px; }
.rise { background: #fddcd8; color: #d94d2b; }
.rise i { margin-left: 16px; margin-right: 31px; }
.fall { background: #d6eedd; color: #3fa664; justify-content: flex-end; }
.fall i { margin-right: 16px; margin-left: 24px; }

.bar { height: 153px; border-top: 2px solid #d9dadc; background: #f7f8fa; display: flex; color: #666; }
.index { width: 310px; display: flex; flex-direction: column; align-items: center; }
.peak { border: 11.500px solid transparent; border-bottom: 8px solid #777; border-top: 0; margin-top: 9px; }
.index strong { font-weight: 400; font-size: 45px; line-height: 54px; margin-top: 11px; letter-spacing: -.6px; color: #dc2e2e; }
.index div { width: 251px; display: flex; justify-content: space-between; align-items: center; font-size: 40px; line-height: 50px; margin: 4px 0 0 33px; }
.index b { font-weight: 400; font-size: 42px; letter-spacing: -.5px; color: #dc2e2e; }
.item { width: 236.500px; display: flex; flex-direction: column; align-items: center; }
.item svg { margin-top: 6px; }
.item span { font-size: 40.500px; line-height: 54px; margin-top: 13px; }

.sysnav { flex: 1; background: #fcfcfc; display: flex; justify-content: center; align-items: center; padding-bottom: 1px; }
</style>
